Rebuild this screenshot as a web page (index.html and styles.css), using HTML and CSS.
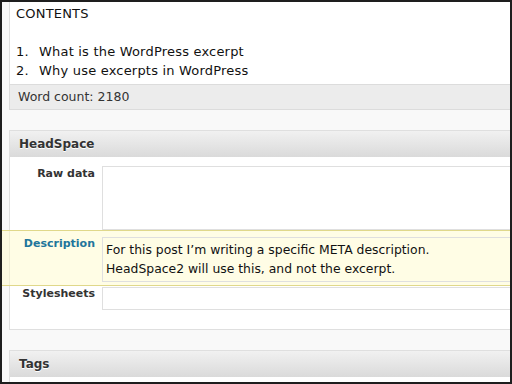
FILE: index.html
```html
<!DOCTYPE html>
<html lang="en">

<head>
    <meta charset="UTF-8">
    <title>Edit Post</title>
    <link rel="stylesheet" href="styles.css">
</head>

<body>
    <div id="frame">
        <div class="editor">
            <div class="editor-body">
                <p>CONTENTS</p>
                <p>&nbsp;</p>
                <ol>
                    <li><span class="num">1.</span>What is the WordPress excerpt</li>
                    <li><span class="num">2.</span>Why use excerpts in WordPress</li>
                </ol>
            </div>
            <div class="word-count">Word count: 2180</div>
        </div>

        <div class="postbox">
            <h3>HeadSpace</h3>
            <div class="inside">
                <div class="row row-raw">
                    <label>Raw data</label>
                    <div class="field field-raw"></div>
                </div>
                <div class="row row-desc highlight">
                    <label>Description</label>
                    <div class="field field-desc">For this post I’m writing a specific META description.<br>HeadSpace2 will use this, and not the excerpt.</div>
                </div>
                <div class="row row-styles">
                    <label>Stylesheets</label>
                    <div class="field field-styles"></div>
                </div>
            </div>
        </div>

        <div class="postbox">
            <h3>Tags</h3>
            <div class="inside"></div>
        </div>
    </div>
</body>

</html>
```

FILE: styles.css
```css
* {
    margin: 0;
    padding: 0;
    box-sizing: border-box;
}

body {
    font-family: "DejaVu Sans", Verdana, sans-serif;
    background: #fff;
}

#frame {
    width: 512px;
    height: 384px;
    border: 2px solid #1e1e1e;
    background-color: #f9f9f9;
    overflow: hidden;
    padding-left: 7px;
}

/* editor area */
.editor {
    margin-right: -12px;
}

.editor-body {
    background-color: #fff;
    border-left: 1px solid #dfdfdf;
    padding: 2px 0 4px 6px;
    font-size: 13px;
    line-height: 19px;
    letter-spacing: 0.2px;
    color: #111;
}

.editor-body ol {
    list-style: none;
}

.editor-body .num {
    display: inline-block;
    width: 23px;
}

.word-count {
    height: 26px;
    border: 1px solid #dcdcdc;
    background-color: #ececec;
    padding-left: 8px;
    font-size: 12.5px;
    line-height: 24px;
    color: #333;
}

/* meta boxes */
.postbox {
    margin-top: 20px;
    margin-right: -12px;
    border: 1px solid #dfdfdf;
    background-color: #fff;
}

.postbox h3 {
    height: 26px;
    padding-left: 9px;
    font-size: 12px;
    line-height: 26px;
    color: #333;
    text-shadow: 0 1px 0 #fff;
    background: linear-gradient(to bottom, #f1f1f1, #dadada);
}

.postbox .inside {
    min-height: 10px;
}

.row {
    display: flex;
    align-items: flex-start;
}

.row label {
    width: 85px;
    flex-shrink: 0;
    margin-right: 7px;
    text-align: right;
    font-size: 11px;
    font-weight: bold;
    line-height: 13px;
    color: #333;
}

.field {
    flex: 1;
    border: 1px solid #dfdfdf;
}

.row-raw {
    padding-top: 9px;
}

.row-raw label {
    padding-top: 1px;
}

.field-raw {
    height: 64px;
    background-color: #fff;
}

.highlight {
    position: relative;
    padding: 7px 0 4px;
}

.highlight::before {
    content: "";
    position: absolute;
    top: 0;
    bottom: 0;
    left: -8px;
    right: 0;
    border-top: 1px solid #e0d88a;
    border-bottom: 1px solid #e0d88a;
    background-color: rgba(255, 251, 204, 0.5);
}

.highlight label {
    position: relative;
    color: #21759b;
}

.field-desc {
    position: relative;
    padding: 2px 3px 3px;
    font-size: 12.4px;
    line-height: 19px;
    color: #111;
}

.row-styles {
    padding: 1px 0 19px;
}

.field-styles {
    height: 23px;
}
```
